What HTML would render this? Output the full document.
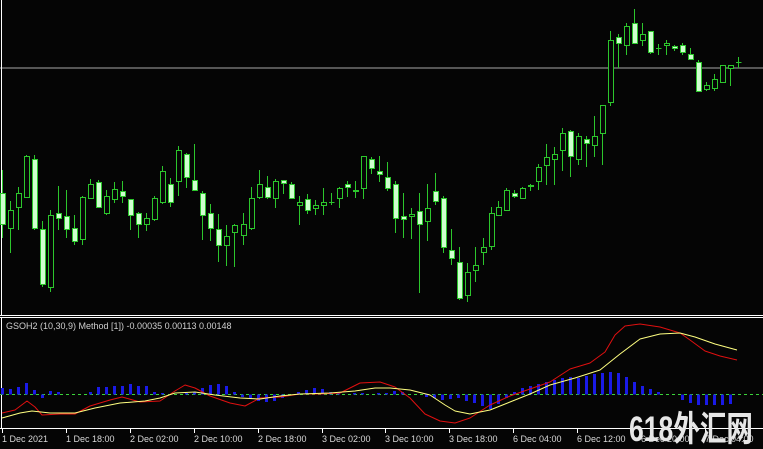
<!DOCTYPE html>
<html><head><meta charset="utf-8"><style>
html,body{margin:0;padding:0;background:#050505;width:763px;height:449px;overflow:hidden}
svg{display:block}
</style></head><body>
<svg id="s" width="763" height="449" xmlns="http://www.w3.org/2000/svg" font-family="Liberation Sans, sans-serif">
<rect width="763" height="449" fill="#050505"/>
<line x1="0" y1="68" x2="763" y2="68" stroke="#a8a8a8" stroke-width="1"/>
<line x1="1.5" y1="0" x2="1.5" y2="316" stroke="#fff"/>
<line x1="0" y1="315.5" x2="763" y2="315.5" stroke="#fff"/>
<line x1="0" y1="317.5" x2="763" y2="317.5" stroke="#fff"/>
<line x1="1.5" y1="318" x2="1.5" y2="429" stroke="#fff"/>
<line x1="0" y1="428.5" x2="763" y2="428.5" stroke="#fff"/>
<line x1="0" y1="394.5" x2="763" y2="394.5" stroke="#3ad43a" stroke-dasharray="3,3"/>
<g id="hist"></g>
<g id="cand"></g>
<polyline id="red" fill="none" stroke="#e01010" stroke-width="1" stroke-linejoin="round"/>
<polyline id="yel" fill="none" stroke="#ffff80" stroke-width="1" stroke-linejoin="round"/>
<text x="6" y="329" fill="#d0d0d0" font-size="9">GSOH2 (10,30,9) Method [1]) -0.00035 0.00113 0.00148</text>
<g id="axis" fill="#d8d8d8" font-size="9"></g>
<text x="629" y="441" fill="#e6e6e6" font-size="35" font-weight="bold" font-family="Liberation Sans, Noto Sans CJK SC, sans-serif" textLength="124" lengthAdjust="spacingAndGlyphs">618外汇网</text>
</svg>
<script>
var NS="http://www.w3.org/2000/svg";
function el(t,a,p){var e=document.createElementNS(NS,t);for(var k in a)e.setAttribute(k,a[k]);p.appendChild(e);return e;}
var C=[[2,193,224,170,238,1],[10,210,228,201,253,0],[18,193,207,187,230,0],[26,156,197,155,198,0],[34,159,228,155,230,1],[42,229,284,221,287,1],[50,215,287,210,292,0],[58,213,218,186,230,1],[66,216,229,190,238,1],[74,228,241,215,245,1],[82,197,239,196,245,0],[90,184,198,179,199,0],[98,182,207,180,207,1],[106,196,213,190,215,0],[114,189,199,182,203,0],[122,191,196,181,203,1],[130,199,215,199,230,1],[138,213,224,212,238,1],[146,218,224,213,231,0],[154,198,219,196,221,0],[162,171,202,166,204,0],[170,184,202,178,207,1],[178,150,181,146,196,0],[186,154,177,153,188,1],[194,180,190,144,190,1],[202,193,215,191,240,1],[210,213,228,204,241,1],[218,229,245,214,262,1],[226,236,245,225,266,0],[234,225,232,224,267,0],
[243,224,235,213,245,0],[251,198,228,187,230,0],[259,184,197,170,199,0],[267,187,197,176,199,1],[275,181,198,179,208,0],[283,180,183,180,194,1],[291,184,198,182,199,1],[299,202,205,196,225,0],[307,199,210,194,214,1],[315,205,208,200,215,0],[323,202,205,188,215,0],[331,202,202,193,205,0],[339,188,198,187,208,0],[347,184,187,181,197,1],[355,190,191,181,198,0],[363,156,188,156,199,0],[371,159,168,157,174,1],[379,171,174,156,182,1],[387,177,188,162,191,1],[395,184,218,181,233,1],[403,216,219,193,238,1],[411,214,216,208,239,0],[419,211,224,193,293,1],[427,208,221,184,241,0],[435,191,201,173,205,1],[443,198,247,196,253,1],[451,250,258,229,265,1],[459,262,298,247,300,1],[467,272,295,263,302,0],[475,265,270,247,282,0],[483,247,252,238,265,0],[491,213,246,207,250,0],[498,207,215,201,216,0],[506,190,210,188,211,0],[514,193,196,190,198,1],[522,188,198,187,198,0],[530,185,186,184,191,0],[538,167,181,164,190,0],[546,157,165,144,185,0],[554,154,159,147,185,0],[562,133,150,128,171,0],[570,131,156,130,177,1],[578,136,159,133,165,0],[586,139,143,136,167,1],[594,136,145,116,157,0],[602,105,133,105,165,0],[610,40,102,31,106,0],[618,37,43,34,68,1],[626,26,45,23,55,0],[634,23,43,9,44,1],[642,34,40,23,46,0],[650,31,52,31,54,1],[658,48,48,44,55,0],[666,43,45,40,55,0],[674,46,48,45,51,1],[682,45,52,43,55,1],[690,54,59,48,59,1],[698,62,91,60,92,1],[706,85,89,82,91,0],[714,79,88,74,91,0],[722,65,82,65,82,0],[730,65,68,65,86,0],[738,62,62,57,68,0]];
var g=document.getElementById("cand");
var SC="#2cc62c";
C.forEach(function(c){var x=c[0]+0.5;
el("line",{x1:x,y1:c[3],x2:x,y2:c[4],stroke:SC},g);
var h=Math.max(c[2]-c[1],0);
if(h<1){el("line",{x1:x-2.5,y1:c[1]+0.5,x2:x+3,y2:c[1]+0.5,stroke:SC},g);}
else el("rect",{x:c[0]-2+0.5,y:c[1]+0.5,width:5,height:h,fill:c[5]?"#d0ffd0":"#050505",stroke:SC},g);
});
var H=[388,389,387,383,390,398,391,392,394,394,394,392,387,387,386,386,384,386,386,392,393,394,395,393,392,388,385,384,386,392,397,399,401,402,401,398,394,392,390,388,389,392,393,394,393,393,394,393,393,391,392,394,395,397,398,400,399,398,401,403,406,409,404,398,392,388,386,384,382,380,378,377,378,376,374,373,372,373,377,382,386,389,392,394,395,400,403,405,405,405,405,404];
var hg=document.getElementById("hist");
H.forEach(function(v,i){var x=2+8*i;var y0=394.5;var t=Math.min(v,y0),b=Math.max(v,y0);if(b-t<1)return;
el("rect",{x:x-1,y:t,width:3,height:b-t,fill:"#1a1ae6"},hg);});
document.getElementById("red").setAttribute("points","2,413 15,410 27,401 35,407 42,415 60,414 75,414 90,406 110,400 122,397 140,402 160,401 175,391 185,385 195,388 210,396 230,403 245,406 260,398 280,397 300,394 320,394 340,393 360,383 380,382 395,387 410,398 425,414 440,421 455,423 470,418 490,405 510,396 530,389 550,382 570,369 590,363 605,352 615,335 625,326 640,324 660,327 680,333 690,340 705,351 720,356 737,360");
document.getElementById("yel").setAttribute("points","2,418 20,413 32,411 50,413 75,413 95,408 120,403 145,401 160,398 175,393 195,392 215,395 240,398 260,399 280,396 300,394 330,393 355,391 375,388 390,388 410,390 430,395 445,405 455,411 470,414 490,410 510,402 530,394 550,385 575,378 600,370 620,354 640,339 660,334 680,333 695,337 715,344 737,350");
var L=["1 Dec 2021","1 Dec 18:00","2 Dec 02:00","2 Dec 10:00","2 Dec 18:00","3 Dec 02:00","3 Dec 10:00","3 Dec 18:00","6 Dec 04:00","6 Dec 12:00","6 Dec 20:00","7 Dec 04:00"];
var ax=document.getElementById("axis");
L.forEach(function(t,i){var x=2+64*i;if(i>5)x-=1;
el("line",{x1:x+0.5,y1:429,x2:x+0.5,y2:433,stroke:"#fff"},ax);
var e=el("text",{x:x,y:442},ax);e.textContent=t;});
</script>
</body></html>
